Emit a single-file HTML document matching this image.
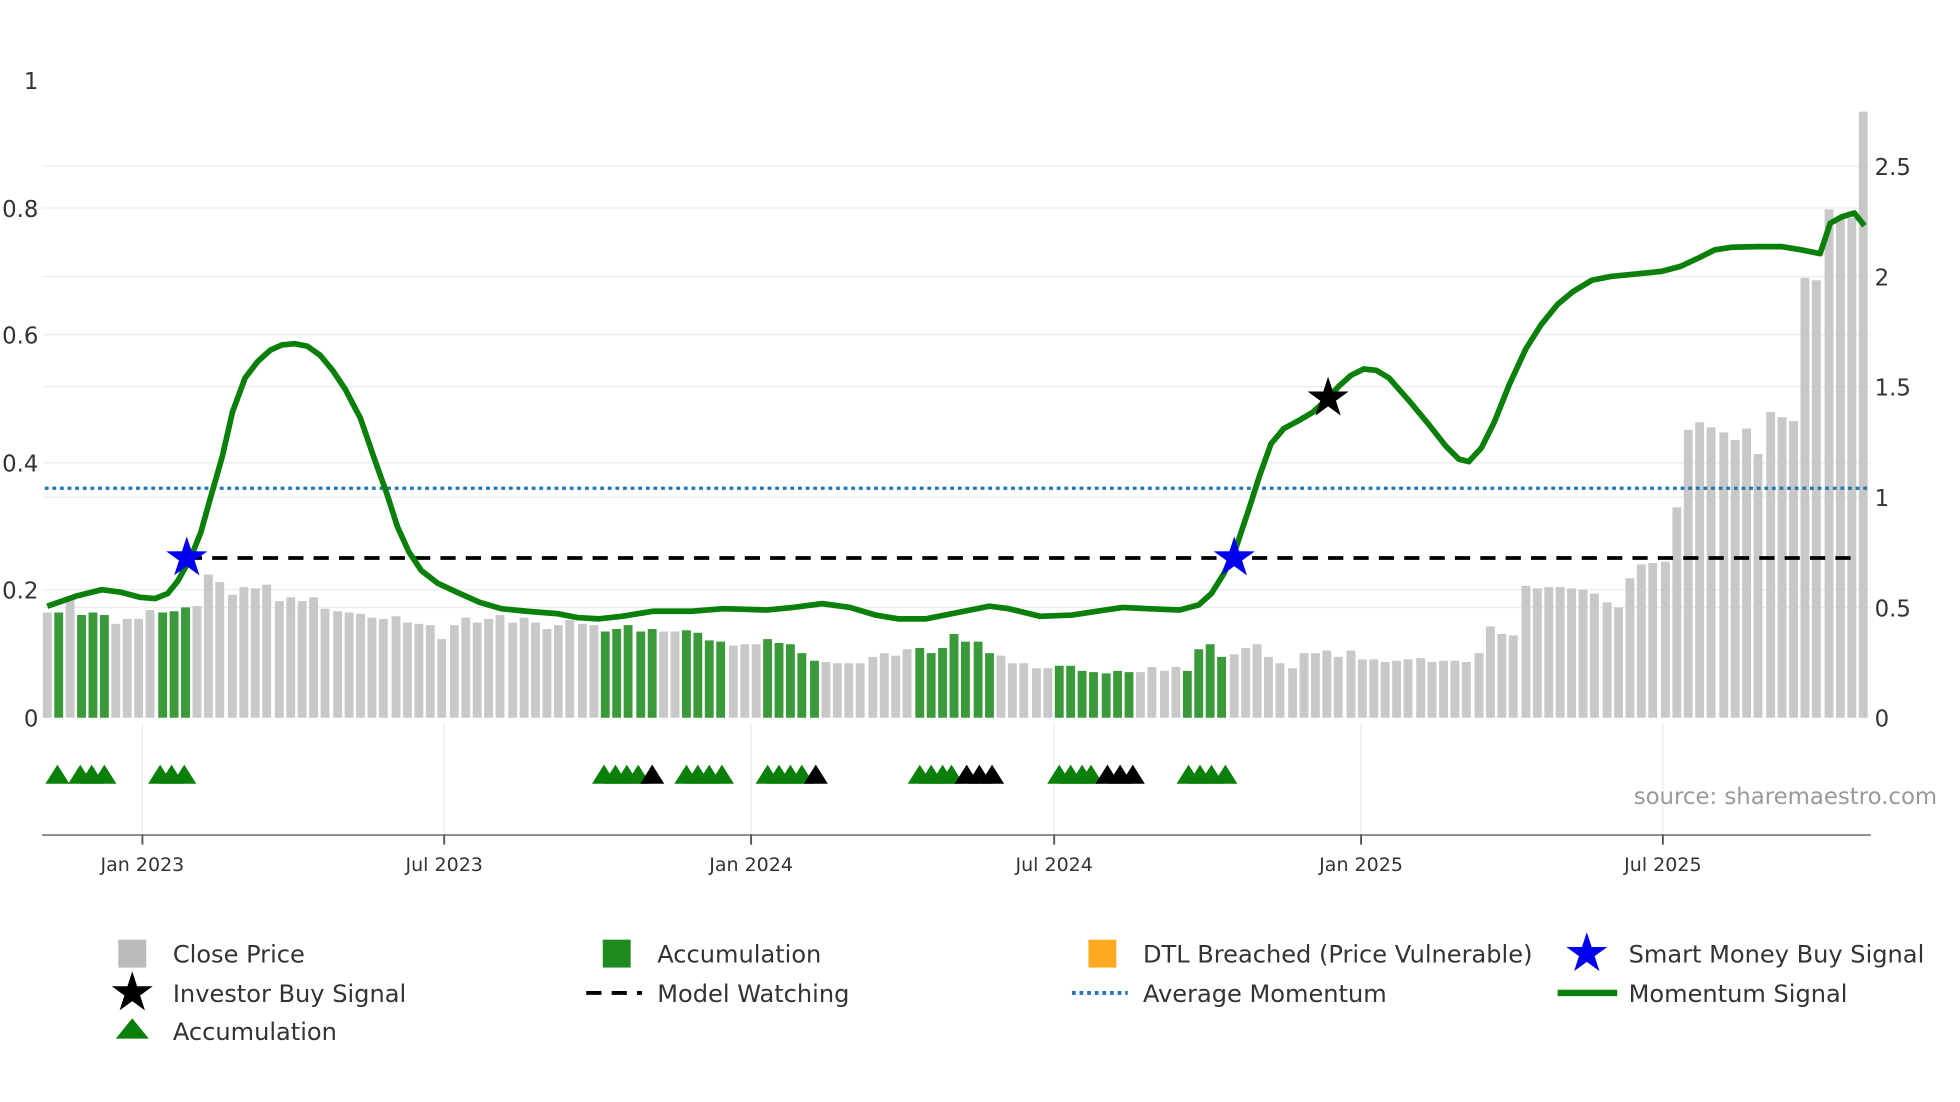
<!DOCTYPE html>
<html><head><meta charset="utf-8"><style>
html,body{margin:0;padding:0;background:#fff;}
svg{display:block;font-family:"DejaVu Sans","Liberation Sans",sans-serif;}
</style></head><body>
<svg width="1960" height="1102" viewBox="0 0 1545 869" xmlns="http://www.w3.org/2000/svg">
<defs>
<path id="st" d="M0,-17 L3.82,-5.26 16.17,-5.25 6.18,2.01 9.99,13.75 0,6.5 -9.99,13.75 -6.18,2.01 -16.17,-5.25 -3.82,-5.26Z"/>
<path id="tri" d="M0,-15 L9.5,0 L-9.5,0Z"/>
</defs>
<rect width="1545" height="869" fill="#fff"/>
<!-- grid -->
<g stroke="#ececec" stroke-width="1">
<path d="M33 164H1475M33 264H1475M33 365H1475M33 465H1475M33 131H1475M33 218H1475M33 305H1475M33 392H1475M33 479H1475"/>
<path d="M112 570V658M350 570V658M592 570V658M831 570V658M1073 570V658M1311 570V658"/>
</g>
<!-- bars -->
<path fill="none" stroke="#c8c8c8" stroke-width="7" d="M37 566V483M55 566V473M91 566V492M100 566V488M109 566V488M118 566V481M155 566V478M164 566V453M173 566V459M183 566V469M192 566V463M201 566V464M210 566V461M220 566V474M229 566V471M238 566V474M247 566V471M256 566V480M266 566V482M275 566V483M284 566V484M293 566V487M302 566V488M312 566V486M321 566V491M330 566V492M339 566V493M348 566V504M358 566V493M367 566V487M376 566V491M385 566V488M394 566V485M404 566V491M413 566V487M422 566V491M431 566V496M440 566V493M449 566V489M459 566V492M468 566V493M523 566V498M532 566V498M578 566V509M587 566V508M596 566V508M651 566V522M660 566V523M669 566V523M678 566V523M688 566V518M697 566V515M706 566V517M715 566V512M789 566V517M798 566V523M807 566V523M817 566V527M826 566V527M899 566V530M908 566V526M918 566V529M927 566V526M973 566V516M982 566V511M991 566V508M1000 566V518M1009 566V523M1019 566V527M1028 566V515M1037 566V515M1046 566V513M1055 566V518M1065 566V513M1074 566V520M1083 566V520M1092 566V522M1101 566V521M1110 566V520M1120 566V519M1129 566V522M1138 566V521M1147 566V521M1156 566V522M1166 566V515M1175 566V494M1184 566V500M1193 566V501M1203 566V462M1212 566V464M1221 566V463M1230 566V463M1239 566V464M1248 566V465M1257 566V468M1267 566V475M1276 566V479M1285 566V456M1294 566V445M1303 566V444M1313 566V443M1322 566V400M1331 566V339M1340 566V333M1349 566V337M1359 566V341M1368 566V347M1377 566V338M1386 566V358M1396 566V325M1405 566V329M1414 566V332M1423 566V219M1432 566V221M1442 566V165M1451 566V172M1460 566V172M1469 566V88"/>
<path fill="none" stroke="#3a9a3a" stroke-width="7" d="M46 566V483M64 566V485M73 566V483M82 566V485M128 566V483M137 566V482M146 566V479M477 566V498M486 566V496M495 566V493M505 566V498M514 566V496M541 566V497M550 566V499M559 566V505M568 566V506M605 566V504M614 566V507M623 566V508M632 566V515M642 566V521M725 566V511M734 566V515M743 566V511M752 566V500M761 566V506M771 566V506M780 566V515M835 566V525M844 566V525M853 566V529M862 566V530M872 566V531M881 566V529M890 566V530M936 566V529M945 566V512M954 566V508M963 566V518"/>
<!-- avg momentum -->
<path d="M35 385H1475" stroke="#1f77b4" stroke-width="2.5" stroke-dasharray="3,3"/>
<!-- model watching -->
<path d="M147 440H1460" stroke="#000" stroke-width="3" stroke-dasharray="12,8"/>
<!-- momentum -->
<polyline fill="none" stroke="#0a7f0a" stroke-width="4.5" stroke-linejoin="round" points="37,478 60,470 80,465 95,467 110,471 122,472 132,468 140,458 150,440 158,420 165,395 175,360 183,325 193,298 203,285 213,276 222,272 232,271 242,273 252,280 262,292 272,307 284,330 295,362 305,390 313,415 322,435 332,450 345,460 360,467 378,475 395,480 415,482 440,484 455,487 472,488 490,486 515,482 545,482 570,480 605,481 625,479 648,476 670,479 690,485 708,488 730,488 755,483 780,478 795,480 820,486 845,485 865,482 885,479 905,480 930,481 945,477 955,468 965,452 975,430 985,400 993,375 1002,350 1012,338 1025,331 1035,325 1045,316 1055,305 1065,296 1075,291 1085,292 1095,298 1110,315 1125,333 1140,352 1150,362 1158,364 1168,353 1178,333 1190,303 1203,275 1215,256 1228,240 1240,230 1255,221 1270,218 1290,216 1310,214 1325,210 1340,203 1352,197 1365,195 1385,194.5 1405,194.5 1420,197 1435,200 1443,176 1452,171 1462,168 1470,178"/>
<!-- stars -->
<use href="#st" x="147" y="440" fill="#0000ee"/>
<use href="#st" x="973" y="440" fill="#0000ee"/>
<use href="#st" x="1047" y="314" fill="#000"/>
<!-- triangles -->
<g fill="#0a7f0a">
<use href="#tri" x="45" y="618"/><use href="#tri" x="63" y="618"/><use href="#tri" x="72" y="618"/><use href="#tri" x="82" y="618"/>
<use href="#tri" x="126" y="618"/><use href="#tri" x="135" y="618"/><use href="#tri" x="145" y="618"/>
<use href="#tri" x="476" y="618"/><use href="#tri" x="485" y="618"/><use href="#tri" x="494" y="618"/><use href="#tri" x="503" y="618"/>
<use href="#tri" x="541" y="618"/><use href="#tri" x="550" y="618"/><use href="#tri" x="559" y="618"/><use href="#tri" x="569" y="618"/>
<use href="#tri" x="605" y="618"/><use href="#tri" x="614" y="618"/><use href="#tri" x="623" y="618"/><use href="#tri" x="632" y="618"/>
<use href="#tri" x="725" y="618"/><use href="#tri" x="734" y="618"/><use href="#tri" x="743" y="618"/><use href="#tri" x="750" y="618"/>
<use href="#tri" x="835" y="618"/><use href="#tri" x="844" y="618"/><use href="#tri" x="853" y="618"/><use href="#tri" x="860" y="618"/>
<use href="#tri" x="937" y="618"/><use href="#tri" x="946" y="618"/><use href="#tri" x="955" y="618"/><use href="#tri" x="966" y="618"/>
</g>
<g fill="#000">
<use href="#tri" x="514" y="618"/><use href="#tri" x="643" y="618"/>
<use href="#tri" x="762" y="618"/><use href="#tri" x="772" y="618"/><use href="#tri" x="782" y="618"/>
<use href="#tri" x="873" y="618"/><use href="#tri" x="883" y="618"/><use href="#tri" x="893" y="618"/>
</g>
<!-- axis -->
<path d="M33 658.5H1475" stroke="#888" stroke-width="1.5"/>
<path d="M112 658V666M350 658V666M592 658V666M831 658V666M1073 658V666M1311 658V666" stroke="#555" stroke-width="1.5"/>
<g font-size="15" fill="#333" text-anchor="middle">
<text x="112" y="687">Jan 2023</text><text x="350" y="687">Jul 2023</text><text x="592" y="687">Jan 2024</text>
<text x="831" y="687">Jul 2024</text><text x="1073" y="687">Jan 2025</text><text x="1311" y="687">Jul 2025</text>
</g>
<g font-size="18" fill="#333" text-anchor="end">
<text x="30" y="70">1</text><text x="30" y="171">0.8</text><text x="30" y="271">0.6</text><text x="30" y="372">0.4</text><text x="30" y="472">0.2</text><text x="30" y="573">0</text>
</g>
<g font-size="18" fill="#333">
<text x="1478" y="138">2.5</text><text x="1478" y="225">2</text><text x="1478" y="312">1.5</text><text x="1478" y="399">1</text><text x="1478" y="486">0.5</text><text x="1478" y="573">0</text>
</g>
<text x="1288" y="634" font-size="18" fill="#999">source: sharemaestro.com</text>
<!-- legend -->
<g font-size="19" fill="#333">
<rect x="93" y="741" width="22" height="22" fill="#bbb"/><text x="136" y="759">Close Price</text>
<rect x="475" y="741" width="22" height="22" fill="#1f8b1f"/><text x="518" y="759">Accumulation</text>
<rect x="858" y="741" width="22" height="22" fill="#ffaa22"/><text x="901" y="759">DTL Breached (Price Vulnerable)</text>
<use href="#st" x="1251" y="752" fill="#0000ee"/><text x="1284" y="759">Smart Money Buy Signal</text>
<use href="#st" x="104" y="783" fill="#000"/><text x="136" y="790">Investor Buy Signal</text>
<path d="M462 783H506" stroke="#000" stroke-width="3" stroke-dasharray="12,8"/><text x="518" y="790">Model Watching</text>
<path d="M845 783H889" stroke="#1f77b4" stroke-width="3" stroke-dasharray="3,3"/><text x="901" y="790">Average Momentum</text>
<path d="M1228 783H1275" stroke="#0a7f0a" stroke-width="5"/><text x="1284" y="790">Momentum Signal</text>
<path d="M104,803 L117,819 L91,819Z" fill="#0a7f0a"/><text x="136" y="820">Accumulation</text>
</g>
</svg>
</body></html>
